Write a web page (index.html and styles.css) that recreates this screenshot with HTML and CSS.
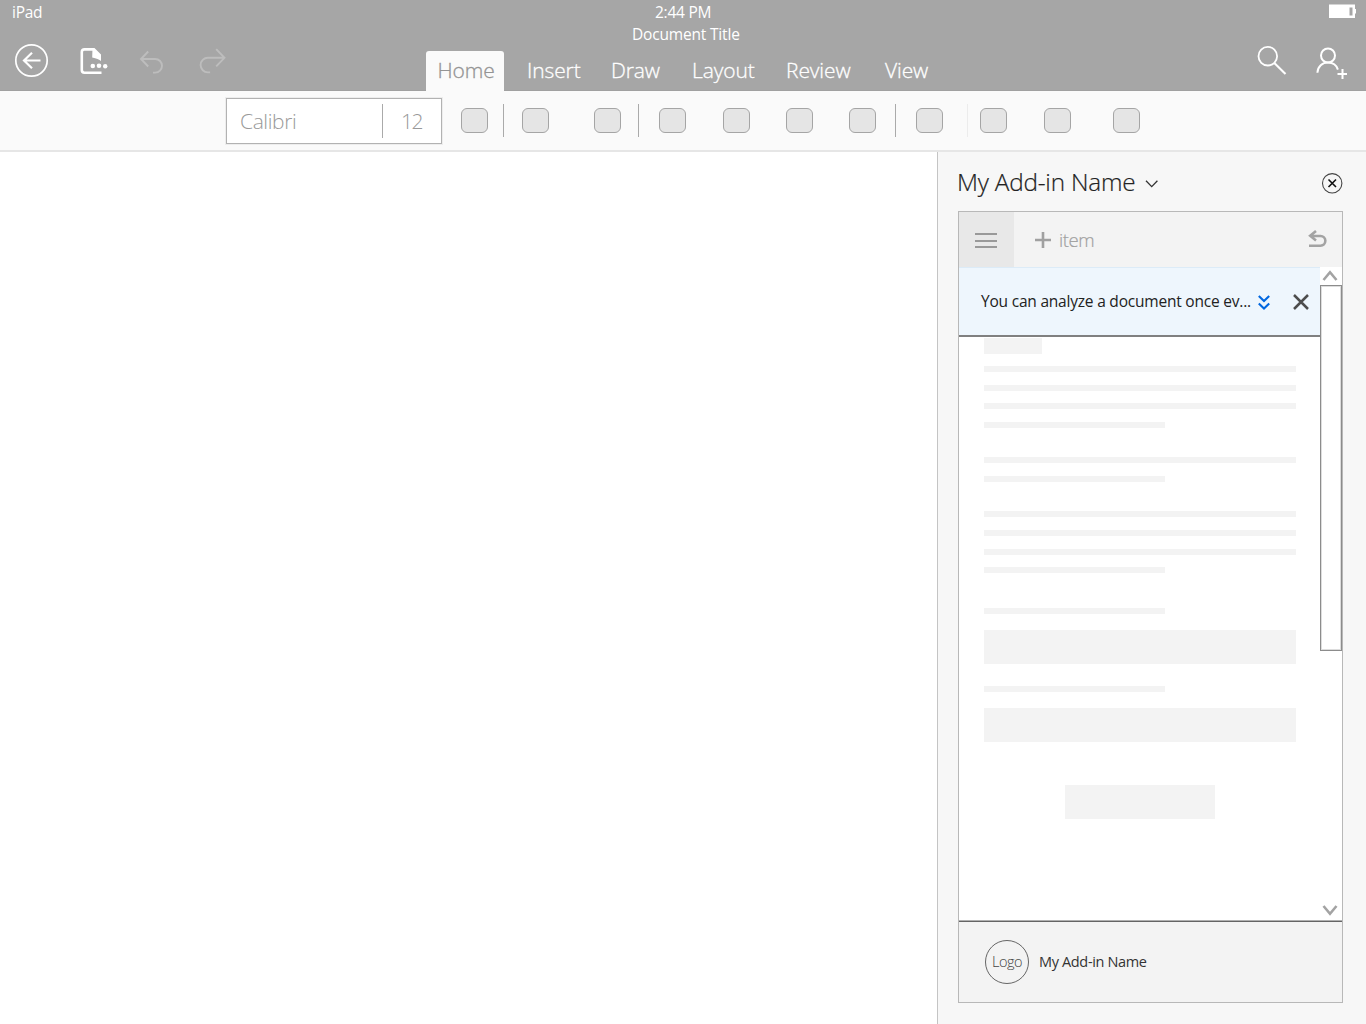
FILE: index.html
```html
<!DOCTYPE html>
<html lang="en">
<head>
<meta charset="utf-8">
<title>Document Title</title>
<link rel="stylesheet" href="styles.css">
</head>
<body>
<div class="app">
  <header class="header">
    <div class="status">
      <span class="device">iPad</span>
      <span class="clock">2:44 PM</span>
      <svg class="battery" width="28" height="14" viewBox="0 0 28 14"><path fill="#fff" d="M0 0.500h26v4.500h1v4.500H26V14H0z"/><path fill="#a6a6a6" d="M20.500 3.500h3v8h-3z"/></svg>
    </div>
    <div class="bar">
      <div class="tools">
        <svg class="tool-back" width="34" height="34" viewBox="0 0 34 34" fill="none" stroke="#fff"><circle cx="16.500" cy="16.500" r="15.700" stroke-width="1.700"/><path stroke-width="2.200" d="M25.500 16.500H9M17 8.700L9 16.500l8 7.800"/></svg>
        <svg class="tool-file" width="29" height="28" viewBox="0 0 29 28"><path fill="none" stroke="#fff" stroke-width="2.600" d="M21.500 24.700H4.500Q1.800 24.700 1.800 22V4Q1.800 1.400 4.500 1.400H13.500"/><path fill="#fff" d="M12.500.1H14.500L21 6.500V13Q18.500 10.800 12.200 9.500z"/><g fill="#fff"><circle cx="12.800" cy="18" r="2.300"/><circle cx="19" cy="17.800" r="2.300"/><circle cx="25.200" cy="18.300" r="2.200"/></g></svg>
        <svg class="tool-undo" width="24" height="24" viewBox="0 0 24 24" fill="none" stroke="#bdbdbd" stroke-width="1.900"><path d="M8.200 1.500L1 9l7.200 7.500M1 9h14.200a6.800 6.800 0 0 1 0 13.600h-2.200"/></svg>
        <svg class="tool-redo" width="27" height="27" viewBox="0 0 27 27" fill="none" stroke="#bdbdbd" stroke-width="1.900"><path d="M16.200 1.200L24.500 9.800l-8.300 8.600M24.500 9.800H7.900a7.300 7.300 0 0 0 0 14.600h2.200"/></svg>
      </div>
      <div class="center">
        <div class="doc-title"><span>Document Title</span></div>
        <nav class="tabs">
          <a class="tab active"><span>Home</span></a>
          <a class="tab"><span>Insert</span></a>
          <a class="tab"><span>Draw</span></a>
          <a class="tab"><span>Layout</span></a>
          <a class="tab"><span>Review</span></a>
          <a class="tab"><span>View</span></a>
        </nav>
      </div>
      <div class="actions">
        <svg class="search" width="30" height="30" viewBox="0 0 30 30" fill="none" stroke="#fff"><circle cx="9.800" cy="10.200" r="9.300" stroke-width="1.800"/><path stroke-width="2.100" d="M16.300 16.900L27.500 28"/></svg>
        <svg class="person" width="32" height="32" viewBox="0 0 32 32" fill="none" stroke="#fff" stroke-width="2"><circle cx="12" cy="8.500" r="7"/><path d="M1.400 25.800C1.800 19.400 6.300 15.600 12 15.600c4.700 0 8.400 2.600 9.900 7M26.500 22v10M21.500 27h9.500"/></svg>
      </div>
    </div>
  </header>

  <div class="ribbon">
    <div class="font-box"><span class="font-name">Calibri</span><span class="font-size">12</span></div>
    <i class="cmd"></i><i class="sep"></i><i class="cmd"></i><i class="cmd"></i><i class="sep"></i><i class="cmd"></i><i class="cmd"></i><i class="cmd"></i><i class="cmd"></i><i class="sep"></i><i class="cmd"></i><i class="sep faint"></i><i class="cmd"></i><i class="cmd"></i><i class="cmd"></i>
  </div>

  <div class="workspace">
    <main class="document"></main>
    <aside class="pane">
      <div class="pane-head">
        <h1>My Add-in Name</h1>
        <svg class="chev" width="14" height="9" viewBox="0 0 14 9" fill="none" stroke="#333" stroke-width="1.300"><path d="M1 1.700l5.700 5.900 5.700-5.900"/></svg>
        <svg class="close" width="22" height="22" viewBox="0 0 22 22" fill="none" stroke="#444"><circle cx="11.200" cy="11.300" r="9.700" stroke-width="1.100"/><path stroke="#111" stroke-width="1.600" d="M7.500 7.500l7.500 7.500M15 7.500l-7.500 7.500"/></svg>
      </div>
      <section class="frame">
        <div class="menu">
          <div class="burger"><i></i><i></i><i></i></div>
          <svg class="plus" width="16" height="16" viewBox="0 0 16 16" stroke="#a0a0a0" stroke-width="2.600"><path d="M8 0v16M0 8h16"/></svg>
          <span class="item">item</span>
          <svg class="return" width="19" height="18" viewBox="0 0 19 18" fill="none" stroke="#a3a3a3" stroke-width="2.600"><path d="M8 1L2.200 5.800l5.800 4.600M2.200 6h10.300a4.850 4.850 0 0 1 0 9.700H1"/></svg>
        </div>
        <div class="body">
          <div class="content">
            <div class="banner">
              <span class="message">You can analyze a document once ev...</span>
              <svg class="expand" width="12" height="16" viewBox="0 0 12 16" fill="none" stroke="#0067e0" stroke-width="2.100"><path d="M.8 1l5.200 5 5.200-5M.8 8.500l5.200 5 5.200-5"/></svg>
              <svg class="dismiss" width="16" height="16" viewBox="0 0 16 16" stroke="#4d4d4d" stroke-width="2.500"><path d="M1 1l14 14M15 1L1 15"/></svg>
            </div>
            <div class="page">
              <div class="heading"></div>
              <div class="para"><i></i><i></i><i></i><i class="short"></i></div>
              <div class="para"><i></i><i class="short"></i></div>
              <div class="para"><i></i><i></i><i></i><i class="short"></i></div>
              <div class="label"></div>
              <div class="field"></div>
              <div class="label second"></div>
              <div class="field"></div>
              <div class="button"></div>
            </div>
          </div>
          <div class="scrollbar">
            <svg class="up" width="14" height="11" viewBox="0 0 14 11" fill="none" stroke="#a3a3a3" stroke-width="2.600"><path d="M.5 10L7 2.200 13.500 10"/></svg>
            <div class="thumb"></div>
            <svg class="down" width="14" height="11" viewBox="0 0 14 11" fill="none" stroke="#a3a3a3" stroke-width="2.600"><path d="M.5 1L7 8.800 13.500 1"/></svg>
          </div>
        </div>
        <footer class="brand">
          <div class="logo"><span>Logo</span></div>
          <span class="brand-name">My Add-in Name</span>
        </footer>
      </section>
    </aside>
  </div>
</div>
</body>
</html>
```
FILE: styles.css
```css
* { box-sizing: border-box; }
body { margin: 0; font-family: "Open Sans", "Noto Sans", sans-serif; background: #fff; }
i { display: block; }
svg { display: block; flex: none; overflow: visible; }
span, h1 { white-space: nowrap; }
.app { width: 1366px; height: 1024px; display: flex; flex-direction: column; overflow: hidden; }

.header { height: 91px; background: #a6a6a6; border-bottom: 1px solid #a0a0a0; color: #fff; }
.status { height: 26px; display: grid; grid-template-columns: 655px 674px 28px; font-size: 15.500px; letter-spacing: -0.250px; line-height: 25px; }
.device { padding-left: 12px; }
.battery { margin-top: 4px; }
.bar { height: 65px; display: grid; grid-template-columns: 426px 832px 108px; }
.tools, .actions { display: flex; align-items: flex-start; }
.tool-back { margin: 18px 0 0 15px; }
.tool-file { margin: 22px 0 0 31px; }
.tool-undo { margin: 24px 0 0 31px; }
.tool-redo { margin: 22px 0 0 36px; }
.doc-title { height: 25px; padding-left: 206px; font-size: 15.500px; letter-spacing: -0.180px; line-height: 17px; }
.tabs { height: 40px; display: grid; grid-template-columns: 101px 84px 81px 94px 99px 60px; font-size: 21px; font-weight: 300; letter-spacing: -0.100px; line-height: 39px; -webkit-text-stroke: 0.300px currentColor; }
.tab.active { width: 78px; padding-left: 11.500px; background: #fafafa; color: #949494; border-radius: 3px 3px 0 0; }
.search { margin-top: 20px; }
.person { margin: 21px 0 0 28px; }

.ribbon { height: 61px; padding-left: 226px; background: #fafafa; border-bottom: 2px solid #e6e6e6; display: grid; grid-template-columns: 235px 42px 19px 72px 44px 21px 64px 63px 63px 46px 21px 51px 13px 64px 69px 27px; }
.font-box { width: 216px; height: 46px; margin-top: 7px; border: 1px solid #b2b2b2; outline: 1px solid #ededed; display: grid; grid-template-columns: 155px 59px; background: #fff; color: #999; font-size: 21px; font-weight: 300; letter-spacing: -0.400px; line-height: 45px; }
.font-name { padding-left: 13px; }
.font-size { height: 34px; margin-top: 5px; line-height: 35px; letter-spacing: -1.500px; border-left: 1px solid #aaa; padding-left: 18px; }
.cmd { width: 27px; height: 25px; margin-top: 17px; border: 1px solid #a5a5a5; border-radius: 6px; background: #e5e5e5; }
.sep { width: 1px; height: 33px; margin-top: 13px; background: #aaa; }
.sep.faint { background: #ececec; }

.workspace { flex: 1; display: flex; }
.document { width: 937px; background: #fff; }
.pane { flex: 1; padding: 0 23px 0 20px; border-left: 1px solid #c4c4c4; background: #f7f7f7; }
.pane-head { height: 59px; display: flex; color: #222; }
.pane-head h1 { margin: 0 0 0 -1px; width: 188px; font-size: 24.300px; letter-spacing: -0.200px; line-height: 60px; font-weight: 300; -webkit-text-stroke: 0.200px currentColor; }
.chev { margin-top: 27px; }
.close { margin: 20px 0 0 162px; }
.frame { height: 792px; border: 1px solid #b8b8b8; background: #fff; display: flex; flex-direction: column; }
.menu { height: 55px; background: #f3f3f3; display: flex; color: #a0a0a0; }
.burger { width: 55px; padding: 21px 0 0 16px; background: #e8e8e8; }
.burger i { width: 22px; height: 2px; margin-bottom: 4.500px; background: #999; }
.plus { margin: 20px 0 0 21px; }
.item { width: 257px; padding-left: 8px; font-size: 18.500px; font-weight: 300; letter-spacing: -0.400px; line-height: 56px; -webkit-text-stroke: 0.200px currentColor; }
.return { margin-top: 18px; }
.body { flex: 1; display: flex; }
.content { width: 361px; }
.banner { height: 70px; display: flex; border-top: 1px solid #dcebf7; border-bottom: 2px solid #808080; background: #eef6fd; color: #222; }
.message { width: 277px; padding-left: 22px; font-size: 15.500px; letter-spacing: -0.210px; line-height: 66px; }
.expand { margin: 27px 0 0 22px; }
.dismiss { margin: 26px 0 0 23px; }
.page { padding: 1px 24px 0 25px; }
.heading { width: 58px; height: 16px; margin-bottom: 12px; background: #f3f3f3; }
.para { display: grid; gap: 12.600px; margin-bottom: 29.500px; }
.para i { height: 6px; background: #f3f3f3; }
.para .short { width: 181px; }
.label { width: 181px; height: 6px; margin: 35px 0 16px; background: #f3f3f3; }
.label.second { margin-top: 22px; }
.field { height: 34px; background: #f3f3f3; }
.button { width: 150px; height: 34px; margin: 43px auto 0 81px; background: #f3f3f3; }
.scrollbar { width: 22px; display: flex; flex-direction: column; align-items: center; }
.up { margin: 3px 3px 4px 0; }
.thumb { width: 22px; height: 366px; border: 1px solid #8c8c8c; box-shadow: inset 0 0 0 1px #ddd; background: #fff; }
.down { margin: auto 3px 4px 0; }
.brand { height: 82px; display: flex; align-items: center; gap: 10px; padding-left: 26px; border-top: 1px solid #b0b0b0; box-shadow: inset 0 1px #646464; background: #f3f3f3; color: #333; }
.logo { width: 44px; height: 44px; border: 1px solid #666; border-radius: 50%; display: flex; justify-content: center; font-size: 14.500px; font-weight: 300; letter-spacing: -0.500px; line-height: 41px; color: #444; }
.brand-name { font-size: 14.500px; letter-spacing: -0.350px; line-height: 20px; margin-top: 1px; }
```
